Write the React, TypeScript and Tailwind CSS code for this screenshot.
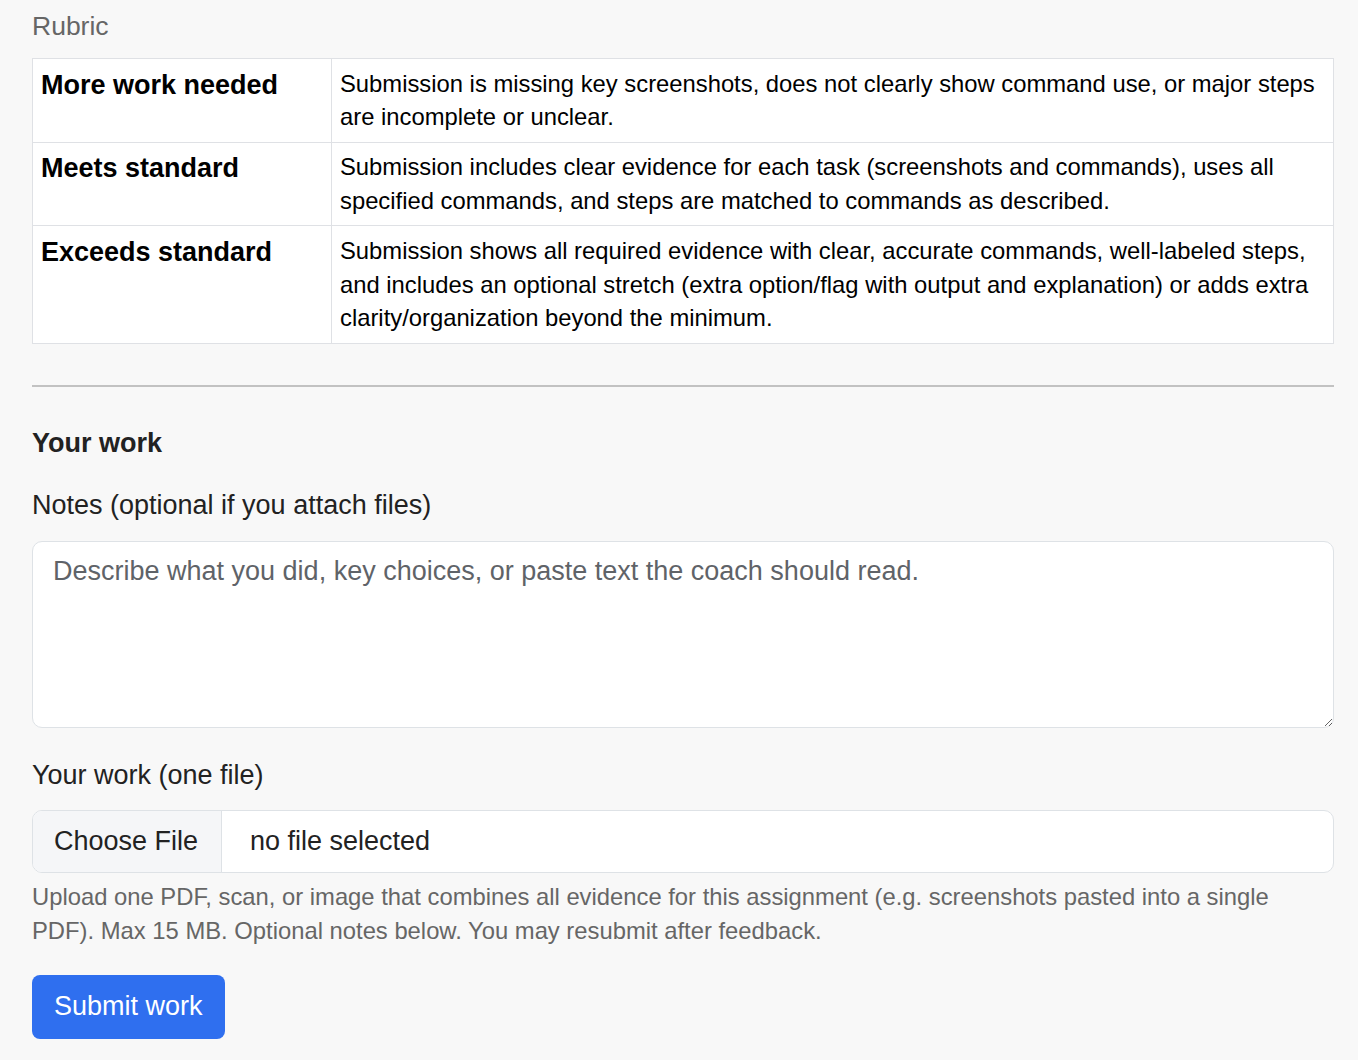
import React from "react";

const rows = [
  {
    label: "More work needed",
    text: "Submission is missing key screenshots, does not clearly show command use, or major steps are incomplete or unclear.",
  },
  {
    label: "Meets standard",
    text: "Submission includes clear evidence for each task (screenshots and commands), uses all specified commands, and steps are matched to commands as described.",
  },
  {
    label: "Exceeds standard",
    text: "Submission shows all required evidence with clear, accurate commands, well-labeled steps, and includes an optional stretch (extra option/flag with output and explanation) or adds extra clarity/organization beyond the minimum.",
  },
];

export default function App() {
  return (
    <div className="min-h-screen bg-[#f8f8f8] pl-8 pr-6 pt-[9px] pb-10 font-['Liberation_Sans',Arial,Helvetica,sans-serif]">
      <div className="text-[26.5px] leading-[34px] text-[#666666]">Rubric</div>

      <table className="mt-[15px] w-full border-collapse bg-white">
        <tbody>
          {rows.map((r) => (
            <tr key={r.label}>
              <th className="w-[299px] border border-[#dfe1e5] px-2 py-[7.75px] text-left align-top text-[27px] font-bold leading-[1.4] text-black">
                {r.label}
              </th>
              <td className="border border-[#dfe1e5] px-2 py-[7.75px] align-top text-[23.8px] leading-[33.6px] text-black">
                {r.text}
              </td>
            </tr>
          ))}
        </tbody>
      </table>

      <div className="mt-[41px] h-[2px] w-full bg-[#c2c2c2]" />

      <h3 className="mt-[40px] text-[27px] font-bold leading-[1.2] text-[#222222]">Your work</h3>

      <div className="mt-[28px] text-[27px] leading-[1.4] text-[#222222]">Notes (optional if you attach files)</div>

      <textarea
        className="mt-4 block h-[187px] w-full resize-y rounded-[10px] border border-[#dee2e6] bg-white px-[20px] py-[11px] text-[27px] leading-[1.4] text-[#222222] outline-none placeholder:text-[#5f6368]"
        placeholder="Describe what you did, key choices, or paste text the coach should read."
      />

      <div className="mt-[29px] text-[27px] leading-[1.4] text-[#222222]">Your work (one file)</div>

      <div className="mt-[15px] flex h-[63px] w-full overflow-hidden rounded-[10px] border border-[#dee2e6] bg-white">
        <div className="flex w-[189px] items-center border-r border-[#dee2e6] bg-[#f5f6f8] pl-[21px] text-[27px] text-[#222222]">
          Choose File
        </div>
        <div className="flex items-center pl-[28px] text-[27px] text-[#222222]">no file selected</div>
      </div>

      <p className="mt-[7px] text-[23.8px] leading-[34px] text-[#666666]">
        Upload one PDF, scan, or image that combines all evidence for this assignment (e.g. screenshots pasted into a single PDF). Max 15 MB. Optional notes below. You may resubmit after feedback.
      </p>

      <button className="mt-[27px] h-[64px] rounded-[8px] bg-[#2f6fef] px-[22px] text-[27px] leading-[1.4] text-white">
        Submit work
      </button>
    </div>
  );
}
